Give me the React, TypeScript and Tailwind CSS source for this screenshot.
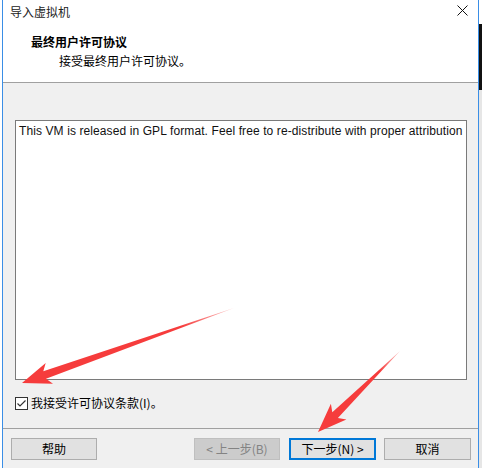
import React from "react";

const cjk = "font-['Microsoft_YaHei','Noto_Sans_CJK_SC',sans-serif]";

type Pt = [number, number];

// annotation arrow: tapered shaft from tail to a swept head at tip
const arrowPoints = (tail: Pt, tip: Pt, head = 24, shaft = 4, barb = 11) => {
  const dx = tip[0] - tail[0];
  const dy = tip[1] - tail[1];
  const len = Math.hypot(dx, dy);
  const ux = dx / len;
  const uy = dy / len;
  const nx = -uy;
  const ny = ux;
  const bx = tip[0] - ux * head;
  const by = tip[1] - uy * head;
  const wx = bx - ux * 5;
  const wy = by - uy * 5;
  const p: Pt[] = [
    tail,
    [bx + nx * shaft, by + ny * shaft],
    [wx + nx * barb, wy + ny * barb],
    tip,
    [wx - nx * barb, wy - ny * barb],
    [bx - nx * shaft, by - ny * shaft],
  ];
  return p.map((q) => `${q[0].toFixed(1)},${q[1].toFixed(1)}`).join(" ");
};

const Btn = ({
  label,
  className,
}: {
  label: string;
  className: string;
}) => (
  <div
    className={`h-[22px] flex items-center justify-center text-[12px] ${cjk} ${className}`}
  >
    {label}
  </div>
);

export default function App() {
  return (
    <div className="relative w-[482px] h-[468px] overflow-hidden flex bg-white">
      <div className="w-[2px] h-full bg-white" />
      <div className="w-[1px] h-full bg-[#3a8ee6]" />

      <div className="flex-1 flex flex-col bg-[#f0f0f0] text-black">
        <div className="h-[30px] bg-white flex items-center justify-between pl-[7px] pr-[10px]">
          <span className={`text-[12px] leading-none text-[#222] -mt-[6px] ${cjk}`}>导入虚拟机</span>
          <svg width="11" height="11" viewBox="0 0 11 11" className="-mt-[10px]">
            <path d="M0.5 0.5 L10.5 10.5 M10.5 0.5 L0.5 10.5" stroke="#111" strokeWidth="1" />
          </svg>
        </div>

        <div className="h-[53px] bg-white border-b border-[#a0a0a0] pl-[28px] pt-[4px]">
          <div className={`text-[12px] font-bold leading-[16px] ${cjk}`}>最终用户许可协议</div>
          <div className={`text-[12px] leading-[16px] mt-[3px] pl-[28px] ${cjk}`}>
            接受最终用户许可协议。
          </div>
        </div>

        <div className="flex-1 flex flex-col pl-[12px] pr-[11px] pt-[37px]">
          <div className="h-[260px] bg-white border border-[#7a7a7a] overflow-hidden pl-[3px] pt-[3px]">
            <div className="whitespace-nowrap text-[12px] leading-[15px] font-['Liberation_Sans',sans-serif] text-[#111] tracking-[0.1px]">
              This VM is released in GPL format. Feel free to re-distribute with proper attribution
            </div>
          </div>
          <div className="flex items-center mt-[15px] gap-[3px]">
            <div className="w-[13px] h-[13px] border border-[#333] bg-white flex items-center justify-center">
              <svg width="11" height="11" viewBox="0 0 11 11">
                <path d="M1.5 5.5 L4 8 L9.5 2.5" stroke="#333" strokeWidth="1.2" fill="none" />
              </svg>
            </div>
            <span className={`text-[12px] leading-[16px] ${cjk}`}>我接受许可协议条款(I)。</span>
          </div>
        </div>

        <div className="h-[40px] border-t border-[#a0a0a0] flex items-start pt-[9px] pl-[8px] pr-[7px]">
          <Btn label="帮助" className="w-[86px] bg-[#e1e1e1] border border-[#adadad]" />
          <div className="flex-1" />
          <Btn
            label="< 上一步(B)"
            className="w-[86px] bg-[#cccccc] border border-[#bfbfbf] text-[#838383]"
          />
          <Btn
            label="下一步(N) >"
            className="w-[87px] ml-[9px] bg-[#e1e1e1] border-2 border-[#0078d7]"
          />
          <Btn
            label="取消"
            className="w-[87px] ml-[8px] bg-[#e1e1e1] border border-[#adadad]"
          />
        </div>
      </div>

      <div className="w-[1px] h-full bg-[#3a8ee6]" />
      <div className="w-[3px] h-full flex flex-col">
        <div className="h-[24px] bg-white" />
        <div className="h-[66px] bg-[#111]" />
        <div className="flex-1 bg-[#e6e6e6]" />
      </div>

      <svg className="absolute inset-0 pointer-events-none" width="482" height="468">
        <defs>
          <linearGradient id="fade1" x1="234" y1="308" x2="22" y2="383" gradientUnits="userSpaceOnUse">
            <stop offset="0" stopColor="#f63c3c" stopOpacity="0.3" />
            <stop offset="0.25" stopColor="#f63c3c" stopOpacity="1" />
          </linearGradient>
          <linearGradient id="fade2" x1="400" y1="351" x2="318" y2="432" gradientUnits="userSpaceOnUse">
            <stop offset="0" stopColor="#f63c3c" stopOpacity="0.3" />
            <stop offset="0.25" stopColor="#f63c3c" stopOpacity="1" />
          </linearGradient>
        </defs>
        <polygon points={arrowPoints([234, 308], [22, 383])} fill="url(#fade1)" />
        <polygon points={arrowPoints([400, 351], [318, 432])} fill="url(#fade2)" />
      </svg>
    </div>
  );
}
